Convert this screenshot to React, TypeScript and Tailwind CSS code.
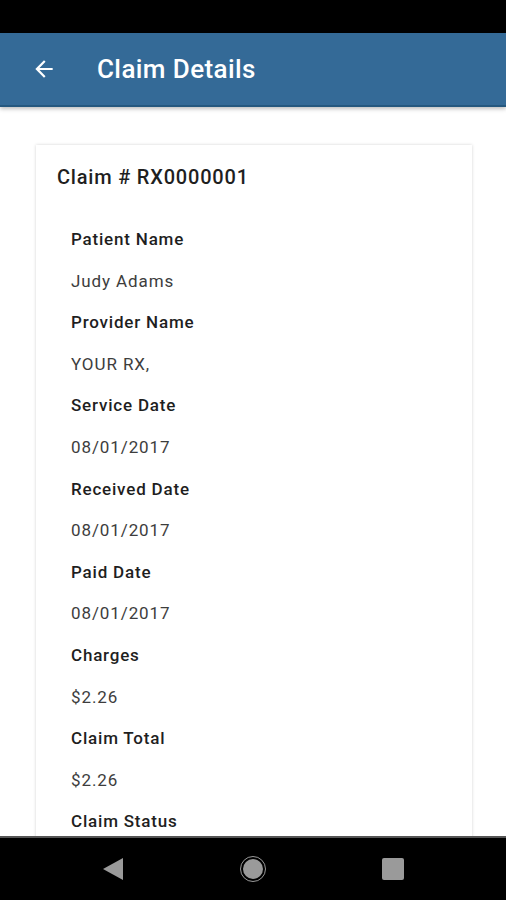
import React from "react";

const rows: [string, string | null][] = [
  ["Patient Name", "Judy Adams"],
  ["Provider Name", "YOUR RX,"],
  ["Service Date", "08/01/2017"],
  ["Received Date", "08/01/2017"],
  ["Paid Date", "08/01/2017"],
  ["Charges", "$2.26"],
  ["Claim Total", "$2.26"],
  ["Claim Status", null],
];

export default function App() {
  return (
    <div
      className="flex h-[900px] w-[506px] flex-col overflow-hidden bg-white"
      style={{ fontFamily: "Roboto, 'Noto Sans', sans-serif" }}
    >
      <div className="h-[33px] shrink-0 bg-black" />
      <div className="relative z-10 flex h-[74px] shrink-0 items-center border-b-2 border-[#25587f] bg-[#346a97] shadow-[0_2px_4px_rgba(0,0,0,0.25)]">
        <svg className="ml-[31px] h-[26px] w-[26px]" viewBox="0 0 24 24" fill="white">
          <path d="M20 11H7.83l5.59-5.59L12 4l-8 8 8 8 1.41-1.41L7.83 13H20v-2z" />
        </svg>
        <span className="ml-[40px] text-[26px] font-medium tracking-[0.4px] text-white">Claim Details</span>
      </div>
      <div className="min-h-0 flex-1 overflow-hidden pl-[36px] pr-[34px] pt-[38px]">
        <div className="h-[800px] bg-white shadow-[0_0_3px_rgba(0,0,0,0.18)]">
          <div className="pl-[21px] pt-[17px] text-[20px] font-medium tracking-[0.8px] text-[#1f1f1f]">
            Claim # RX0000001
          </div>
          <div className="flex flex-col pl-[35px] pt-[27px]">
            {rows.map(([label, value]) => (
              <React.Fragment key={label}>
                <div className="flex h-[41.6px] items-center text-[17px] font-medium tracking-[0.8px] text-[#1f1f1f]">
                  {label}
                </div>
                {value && (
                  <div className="flex h-[41.6px] items-center text-[17px] tracking-[0.9px] text-[#3d3d3d]">
                    {value}
                  </div>
                )}
              </React.Fragment>
            ))}
          </div>
        </div>
      </div>
      <div className="flex h-[64px] shrink-0 items-center border-t-2 border-[#555] bg-black pl-[43px]">
        <div className="flex w-[140px] justify-center">
          <svg width="22" height="24" viewBox="0 0 22 24">
            <polygon points="21,1 21,23 1,12" fill="#9a9a9a" />
          </svg>
        </div>
        <div className="flex w-[140px] justify-center">
          <div className="flex h-[26px] w-[26px] items-center justify-center rounded-full border-[1.5px] border-[#9a9a9a]">
            <div className="h-[20px] w-[20px] rounded-full bg-[#9a9a9a]" />
          </div>
        </div>
        <div className="flex w-[140px] justify-center">
          <div className="h-[22px] w-[22px] rounded-[2px] bg-[#9a9a9a]" />
        </div>
      </div>
    </div>
  );
}
